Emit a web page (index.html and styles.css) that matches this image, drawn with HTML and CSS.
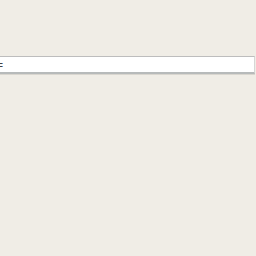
FILE: index.html
```html
<!DOCTYPE html>
<html>
<head><link rel="stylesheet" href="styles.css"></head>
<body>
<div class="page">
  <div class="bar"><span class="label">=</span></div>
</div>
</body>
</html>
```
FILE: styles.css
```css
html, body { margin: 0; padding: 0; }
body { background: #f0ede6; width: 256px; height: 256px; overflow: hidden; font-family: "DejaVu Sans", sans-serif; }
.page { padding-top: 56px; }
.bar {
  margin-left: -8px;
  width: 262px;
  height: 15px;
  background: #fff;
  border-top: 1px solid #bdbdbd;
  border-right: 1px solid #d6d6d6;
  border-bottom: 2px solid #b7baba;
  box-shadow: 0 1px 0 #d9d6cf;
  display: flex;
  align-items: center;
}
.label { font-size: 13px; color: #444; line-height: 1; margin-left: 1px; }
```
